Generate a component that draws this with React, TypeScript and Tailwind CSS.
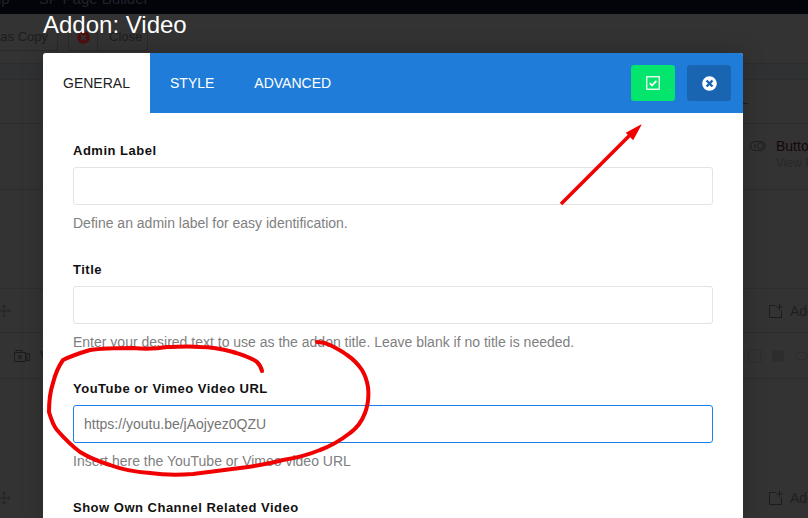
import { FaTimesCircle } from "react-icons/fa";
import { Move } from "lucide-react";

function AddIcon() {
  return (
    <svg width="14" height="14" viewBox="0 0 14 14" fill="none" stroke="#1c1c1c" strokeWidth="1" className="shrink-0">
      <path d="M6.5 1.5H.5v12h12V6.5" />
      <path d="M10.5 0v6M7.5 3h6" />
    </svg>
  );
}

function AddButton() {
  return (
    <div className="flex items-center gap-[7px] w-[39px] shrink-0 overflow-hidden">
      <AddIcon />
      <span className="text-sm">Add</span>
    </div>
  );
}

function Field({ label, help, value, focused }: { label: string; help: string; value?: string; focused?: boolean }) {
  return (
    <div className="mb-[30px]">
      <div className="text-[13px] leading-[17px] font-bold text-[#111] tracking-[0.5px] mb-[8px]">{label}</div>
      <div
        className={
          "h-[38px] rounded-[3px] border bg-white px-[10px] text-sm leading-[36px] text-[#757575] " +
          (focused ? "border-[#1a82f0]" : "border-[#e3e3e3]")
        }
      >
        {value}
      </div>
      <div className="mt-[10px] text-sm leading-[16px] text-[#808080]">{help}</div>
    </div>
  );
}

function Backdrop() {
  return (
    <div className="flex flex-col h-full text-[#1f1f1f] text-sm">
      <div className="h-[14px] bg-[#02040a] overflow-hidden flex gap-[29px] text-[#20222a] text-[15px] leading-[4px]">
        <span className="-ml-[2px] -mt-[3px]">ip</span>
        <span className="-mt-[3px]">SP Page Builder</span>
      </div>
      <div className="h-[50px] flex items-end gap-[10px] pb-[12px] border-b border-[#2c2c2c] text-[13px]">
        <div className="-ml-[50px] w-[108px] h-[26px] border-r border-b border-[#2a2a2a] rounded-br-[3px] flex items-center justify-end pr-[9px] text-[#1d1d1d]">
          Save as Copy
        </div>
        <div className="w-[80px] h-[26px] border-x border-b border-[#2a2a2a] rounded-b-[3px] flex items-center">
          <div className="w-[29px] h-full flex items-center justify-center border-r border-[#2a2a2a]">
            <FaTimesCircle size={13} className="text-[#4f0f0f]" />
          </div>
          <span className="pl-[11px] text-[#1d1d1d]">Close</span>
        </div>
      </div>
      <div className="h-[15px] bg-[#2f3133]" />
      <div className="h-[44px] border-t border-[#2d2d2d] flex items-center justify-end pr-[60px] pt-[4px]">
        <div className="w-[5px] h-px bg-[#1c1c1c]" />
      </div>
      <div className="h-[66px] border-t border-[#2c2c2c] flex items-start justify-end gap-[10px] pt-[13px]">
        <svg width="16" height="10" viewBox="0 0 16 10" fill="none" stroke="#1f1f1f" strokeWidth="1" className="mt-[4px]">
          <rect x="0.5" y="0.5" width="15" height="9" rx="4.5" />
          <circle cx="10.5" cy="5" r="3" />
          <path d="M5 3v4" />
        </svg>
        <div className="w-[32px] overflow-hidden whitespace-nowrap text-sm leading-[18px]">
          <div className="text-[#14060c]">Buttons</div>
          <div className="text-xs text-[#272727]">View Button</div>
        </div>
      </div>
      <div className="h-[99px] border-t border-[#2c2c2c]" />
      <div className="h-[44px] border-t border-[#2d2d2d] flex items-center justify-between">
        <Move size={14} strokeWidth={1.1} className="-ml-[3px] text-[#1c1c1c]" />
        <AddButton />
      </div>
      <div className="h-[47px] border-t border-b border-[#2c2c2c] flex items-center">
        <svg width="16" height="13" viewBox="0 0 16 13" fill="none" stroke="#1c1c1c" strokeWidth="1" className="ml-[14px]">
          <path d="M.5 3.5h11v9H.5zM2 3.5V1.5h6v2M13 4.5v7h2.5v-7z" />
          <path d="M5 6v4l3-2z" />
        </svg>
        <span className="ml-[10px]">V</span>
        <div className="ml-auto flex items-center gap-[11px] opacity-25">
          <div className="w-[13px] h-[14px] border border-[#1c1c1c]" />
          <div className="w-[12px] h-[12px] bg-[#1c1c1c] rounded-[2px]" />
          <div className="w-[13px] h-[8px] border border-[#1c1c1c] rounded-full" />
        </div>
      </div>
      <div className="h-[97px]" />
      <div className="flex-1 flex items-center justify-between pt-[2px]">
        <Move size={14} strokeWidth={1.1} className="-ml-[3px] text-[#1c1c1c]" />
        <AddButton />
      </div>
    </div>
  );
}

function Annotations() {
  return (
    <svg width="808" height="518" viewBox="0 0 808 518" fill="none" className="absolute left-0 top-0 pointer-events-none">
      <path d="M561 204L632 133" stroke="#f00000" strokeWidth="3.5" />
      <path d="M640 126L627 133L633 139Z" fill="#f00000" stroke="#f00000" strokeWidth="1.5" />
      <path
        d="M262 371C261 366 259 364 257 362C250 357 242 355 233 352C222 349 211 347 200 347C188 346 178 347 167 347C155 349 144 349 133 348C118 348 104 348 90 350C80 353 71 356 63 360C58 367 55 375 53 383C50 392 49 402 49 412C51 419 53 425 57 430C64 438 72 446 80 452C90 458 100 462 110 465C123 470 136 472 150 473C164 475 179 475 193 474C209 472 225 470 240 468C255 466 269 464 283 460C296 458 308 455 320 450C331 446 341 440 350 433C357 428 362 421 365 413C368 405 369 396 368 387C367 381 365 375 362 370C358 364 353 359 347 355C342 351 336 348 330 345C326 343 321 342 317 342"
        stroke="#f00000"
        strokeWidth="4"
        strokeLinecap="round"
      />
    </svg>
  );
}

export default function App() {
  return (
    <div className="relative w-[808px] h-[518px] overflow-hidden bg-[#333333] font-['Liberation_Sans',Arial,sans-serif]">
      <Backdrop />

      <div className="absolute left-[43px] top-[11px] text-2xl leading-[28px] text-white">Addon: Video</div>

      <div className="absolute left-[43px] top-[53px] w-[700px] h-[480px] bg-white rounded-t-[3px] overflow-hidden shadow-[0_0_24px_rgba(0,0,0,0.2)]">
        <div className="h-[60px] bg-[#1f7dd9] flex items-start">
          <div className="w-[107px] h-[60px] bg-white rounded-tl-[2px] flex items-center justify-center text-sm text-[#222]">GENERAL</div>
          <div className="h-[60px] px-5 flex items-center text-sm text-white">STYLE</div>
          <div className="h-[60px] px-5 flex items-center text-sm text-white">ADVANCED</div>
          <div className="ml-auto flex gap-3 pt-3 pr-3">
            <button className="w-11 h-9 rounded-[3px] bg-[#03e56c] flex items-center justify-center">
              <svg width="14" height="14" viewBox="0 0 14 14" fill="none" stroke="white">
                <rect x="0.75" y="0.75" width="12.5" height="12.5" strokeWidth="1.3" />
                <path d="M3.8 7.2L6 9.4L10.4 4.8" strokeWidth="1.8" />
              </svg>
            </button>
            <button className="w-11 h-9 rounded-[3px] bg-[#1a65b1] flex items-center justify-center">
              <FaTimesCircle size={15} className="text-white" />
            </button>
          </div>
        </div>
        <div className="px-[30px] pt-[29px]">
          <Field label="Admin Label" help="Define an admin label for easy identification." />
          <Field label="Title" help="Enter your desired text to use as the addon title. Leave blank if no title is needed." />
          <Field
            label="YouTube or Vimeo Video URL"
            help="Insert here the YouTube or Vimeo video URL"
            value="https://youtu.be/jAojyez0QZU"
            focused
          />
          <div className="text-[13px] leading-[17px] font-bold text-[#111] tracking-[0.5px]">Show Own Channel Related Video</div>
        </div>
      </div>

      <Annotations />
    </div>
  );
}
